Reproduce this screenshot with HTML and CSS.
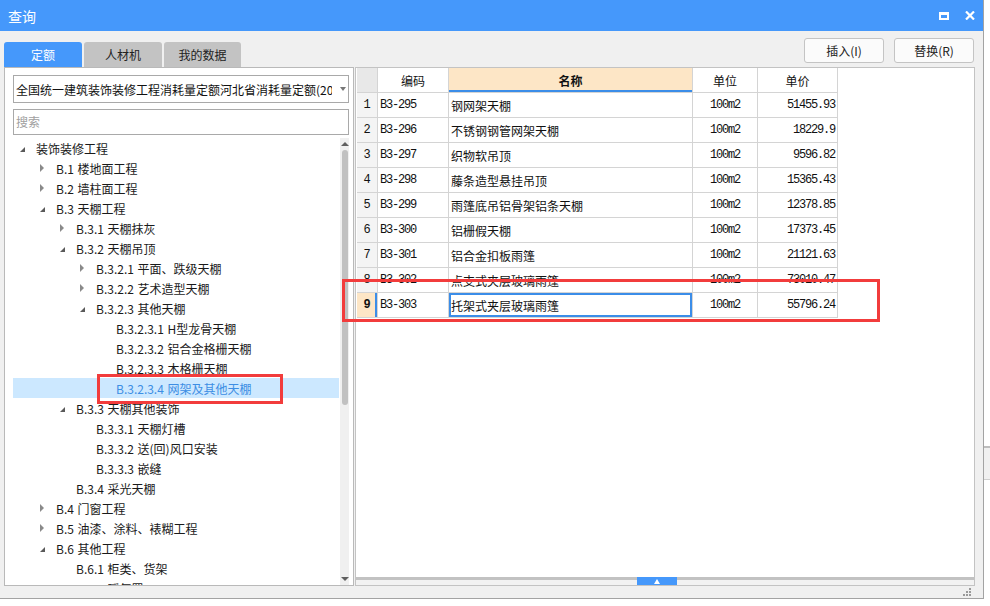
FILE: index.html
```html
<!DOCTYPE html>
<html>
<head>
<meta charset="utf-8">
<title>查询</title>
<link rel="stylesheet" href="styles.css">
</head>
<body>
<div class="bgpiece"></div>
<div class="window">
  <div class="titlebar">
    <span class="title">查询</span>
    <div class="tb-icons">
      <svg class="ic" width="10" height="8" viewBox="0 0 10 8"><path d="M0 0H10V8H0Z M2 3V6H8V3Z" fill="#fff" fill-rule="evenodd"/></svg>
      <svg class="ic" width="10" height="9" viewBox="0 0 10 9"><path d="M1 0.5L9 8.5M9 0.5L1 8.5" stroke="#fff" stroke-width="2.2" fill="none"/></svg>
    </div>
  </div>
  <div class="toprow">
    <div class="tabs">
      <div class="tab active">定额</div>
      <div class="tab">人材机</div>
      <div class="tab t3">我的数据</div>
    </div>
    <div class="btns">
      <div class="btn">插入(I)</div>
      <div class="btn">替换(R)</div>
    </div>
  </div>
  <div class="main">
    <div class="leftpanel">
      <div class="select"><span class="select-text">全国统一建筑装饰装修工程消耗量定额河北省消耗量定额(2016)</span><span class="caret"></span></div>
      <div class="search">搜索</div>
      <div class="tree">
        <div class="tree-list">
          <div class="row l0"><span class="tg open"></span>装饰装修工程</div>
          <div class="row l1"><span class="tg closed"></span>B.1 楼地面工程</div>
          <div class="row l1"><span class="tg closed"></span>B.2 墙柱面工程</div>
          <div class="row l1"><span class="tg open"></span>B.3 天棚工程</div>
          <div class="row l2"><span class="tg closed"></span>B.3.1 天棚抹灰</div>
          <div class="row l2"><span class="tg open"></span>B.3.2 天棚吊顶</div>
          <div class="row l3"><span class="tg closed"></span>B.3.2.1 平面、跌级天棚</div>
          <div class="row l3"><span class="tg closed"></span>B.3.2.2 艺术造型天棚</div>
          <div class="row l3"><span class="tg open"></span>B.3.2.3 其他天棚</div>
          <div class="row l4"><span class="tg"></span>B.3.2.3.1 H型龙骨天棚</div>
          <div class="row l4"><span class="tg"></span>B.3.2.3.2 铝合金格栅天棚</div>
          <div class="row l4"><span class="tg"></span>B.3.2.3.3 木格栅天棚</div>
          <div class="row l4 sel"><span class="tg"></span>B.3.2.3.4 网架及其他天棚</div>
          <div class="row l2"><span class="tg open"></span>B.3.3 天棚其他装饰</div>
          <div class="row l3"><span class="tg"></span>B.3.3.1 天棚灯槽</div>
          <div class="row l3"><span class="tg"></span>B.3.3.2 送(回)风口安装</div>
          <div class="row l3"><span class="tg"></span>B.3.3.3 嵌缝</div>
          <div class="row l2"><span class="tg"></span>B.3.4 采光天棚</div>
          <div class="row l1"><span class="tg closed"></span>B.4 门窗工程</div>
          <div class="row l1"><span class="tg closed"></span>B.5 油漆、涂料、裱糊工程</div>
          <div class="row l1"><span class="tg open"></span>B.6 其他工程</div>
          <div class="row l2"><span class="tg"></span>B.6.1 柜类、货架</div>
          <div class="row l2"><span class="tg"></span>B.6.2 暖气罩</div>
        </div>
        <div class="vscroll">
          <span class="arr up"></span>
          <span class="thumb"></span>
          <span class="arr down"></span>
        </div>
      </div>
    </div>
    <div class="rightpanel">
      <div class="grid">
        <div class="c hd rn"></div><div class="c hd">编码</div><div class="c hd selcol">名称</div><div class="c hd">单位</div><div class="c hd">单价</div>

        <div class="c rn">1</div><div class="c code">B3-295</div><div class="c name">钢网架天棚</div><div class="c unit">100m2</div><div class="c price">51455.93</div>
        <div class="c rn">2</div><div class="c code">B3-296</div><div class="c name">不锈钢钢管网架天棚</div><div class="c unit">100m2</div><div class="c price">18229.9</div>
        <div class="c rn">3</div><div class="c code">B3-297</div><div class="c name">织物软吊顶</div><div class="c unit">100m2</div><div class="c price">9596.82</div>
        <div class="c rn">4</div><div class="c code">B3-298</div><div class="c name">藤条造型悬挂吊顶</div><div class="c unit">100m2</div><div class="c price">15365.43</div>
        <div class="c rn">5</div><div class="c code">B3-299</div><div class="c name">雨篷底吊铝骨架铝条天棚</div><div class="c unit">100m2</div><div class="c price">12378.85</div>
        <div class="c rn">6</div><div class="c code">B3-300</div><div class="c name">铝栅假天棚</div><div class="c unit">100m2</div><div class="c price">17373.45</div>
        <div class="c rn">7</div><div class="c code">B3-301</div><div class="c name">铝合金扣板雨篷</div><div class="c unit">100m2</div><div class="c price">21121.63</div>
        <div class="c rn">8</div><div class="c code">B3-302</div><div class="c name">点支式夹层玻璃雨篷</div><div class="c unit">100m2</div><div class="c price">73010.47</div>
        <div class="c rn selrow">9</div><div class="c code">B3-303</div><div class="c name selcell">托架式夹层玻璃雨篷</div><div class="c unit">100m2</div><div class="c price">55796.24</div>
      </div>
      <div class="hbar"><span class="handle"><span class="htri"></span></span></div>
    </div>
  </div>
  <div class="bottom">
    <svg class="grip" width="8" height="8" viewBox="0 0 8 8">
      <rect x="6" y="0" width="2" height="2" fill="#9a9a9a"/>
      <rect x="3" y="3" width="2" height="2" fill="#9a9a9a"/>
      <rect x="6" y="3" width="2" height="2" fill="#9a9a9a"/>
      <rect x="0" y="6" width="2" height="2" fill="#9a9a9a"/>
      <rect x="3" y="6" width="2" height="2" fill="#9a9a9a"/>
      <rect x="6" y="6" width="2" height="2" fill="#9a9a9a"/>
    </svg>
  </div>
</div>
<div class="mark mark1"></div>
<div class="mark mark2"></div>
</body>
</html>
```
FILE: styles.css
```css
* { box-sizing: border-box; }
html, body { margin: 0; padding: 0; background: #fff; }
body {
  width: 990px; height: 606px; overflow: hidden; position: relative;
  font-family: "Noto Sans CJK SC", "Microsoft YaHei", sans-serif;
  font-size: 12px; color: #1e1e1e;
}
.bgpiece {
  position: absolute; left: 984px; top: 446px; width: 6px; height: 34px;
  background: #f0f0f0; border-top: 2px solid #bdbdbd; border-bottom: 1px solid #cfcfcf;
}
.window {
  width: 984px; height: 599px; background: #f0f0f0;
  border-right: 1px solid #a3a3a3; border-bottom: 1px solid #a3a3a3;
  display: flex; flex-direction: column;
}
.titlebar {
  height: 31px; flex: none; background: #4598fb; color: #fff;
  display: flex; align-items: center; padding: 0 8px 0 8px;
}
.title { flex: 1; font-size: 14px; }
.tb-icons { display: flex; align-items: center; gap: 16px; }
.ic { display: block; }

.toprow {
  height: 36px; flex: none; display: flex; justify-content: space-between;
  padding: 0 9px 0 4px;
}
.tabs { display: flex; gap: 2px; align-self: flex-end; }
.tab {
  width: 78px; height: 25px; line-height: 25px; text-align: center;
  background: #c3c3c3; color: #222; border-radius: 3px 3px 0 0; font-size: 12px;
}
.tab.t3 { width: 77px; }
.tab.active { background: #4598fb; color: #fff; }
.btns { display: flex; gap: 10px; margin-top: 7px; }
.btn {
  width: 80px; height: 25px; line-height: 23px; text-align: center;
  background: #fbfbfb; border: 1px solid #c4c4c4; border-radius: 3px; color: #222;
}

.main { height: 519px; flex: none; display: flex; gap: 1px; padding-left: 4px; }
.leftpanel {
  width: 350px; height: 519px; background: #fff; border: 1px solid #b9b9b9;
  padding: 7px 4px 0 8px; display: flex; flex-direction: column;
}
.select {
  height: 28px; flex: none; border: 1px solid #a9a9a9; display: flex; align-items: center;
  padding-left: 2px; position: relative;
}
.select-text { width: 316px; overflow: hidden; white-space: nowrap; font-size: 12px; color: #111; }
.caret {
  margin-left: 8px; width: 0; height: 0;
  border-left: 3px solid transparent; border-right: 3px solid transparent; border-top: 4px solid #777;
}
.search {
  height: 26px; flex: none; margin-top: 6px; border: 1px solid #a9a9a9;
  line-height: 24px; padding-left: 2px; color: #a0a0a0;
}
.tree { margin-top: 3px; height: 447px; display: flex; overflow: hidden; }
.tree-list { width: 327px; overflow: hidden; }
.row { height: 20px; display: flex; align-items: center; white-space: pre; color: #1a1a1a; word-spacing: 1px; }
.row.sel { background: #cce8ff; color: #3d8ee4; }
.l0 { padding-left: 7px; }
.l1 { padding-left: 27px; }
.l2 { padding-left: 47px; }
.l3 { padding-left: 67px; }
.l4 { padding-left: 87px; }
.tg { width: 16px; height: 20px; flex: none; position: relative; }
.tg.closed::before {
  content: ""; position: absolute; left: 0; top: 6px; width: 0; height: 0;
  border-left: 4px solid #8a8a8a; border-top: 4px solid transparent; border-bottom: 4px solid transparent;
}
.tg.open::before {
  content: ""; position: absolute; left: 0; top: 9px; width: 0; height: 0;
  border-bottom: 5px solid #5a5a5a; border-left: 5px solid transparent;
}
.vscroll {
  width: 9px; margin-left: 1px; background: #f0f0f0; display: flex; flex-direction: column; align-items: center;
}
.arr { width: 0; height: 0; border-left: 4px solid transparent; border-right: 4px solid transparent; }
.arr.up { border-bottom: 4px solid #606060; margin-top: 4px; }
.thumb { width: 6px; height: 255px; background: #c1c1c1; border-radius: 3px; margin-top: 4px; }
.arr.down { border-top: 4px solid #606060; margin-top: auto; margin-bottom: 4px; }

.rightpanel {
  width: 620px; height: 519px; background: #fff; border: 1px solid #c3c3c3;
  padding-left: 1px; display: flex; flex-direction: column;
}
.grid {
  display: grid; grid-template-columns: 21px 71px 244px 65px 80px;
  grid-auto-rows: 25px; width: 481px;
}
.c {
  border-right: 1px solid #d4d4d4; border-bottom: 1px solid #d4d4d4;
  display: flex; align-items: center; white-space: nowrap; overflow: hidden;
  font-size: 12px; color: #111;
}
.hd { justify-content: center; font-size: 12px; }
.hd.rn { background: #e8e8e8; }
.selcol { background: #fde6c6; font-weight: bold; box-shadow: inset 0 -2px 0 #3b8de8; }
.rn {
  background: #f4f4f4; justify-content: center;
  font-family: "Liberation Mono", monospace; font-size: 12px;
}
.selrow { background: #fde6c6; font-weight: bold; box-shadow: inset -2px 0 0 #3b8de8; }
.code, .unit, .price {
  font-family: "Liberation Mono", monospace; font-size: 12px; letter-spacing: -1.2px;
}
.code { padding-left: 2px; }
.name { padding-left: 2px; }
.unit { justify-content: center; }
.price { justify-content: flex-end; padding-right: 2px; }
.selcell { box-shadow: inset 0 0 0 2px #3b8de8; }

.hbar {
  margin-top: auto; margin-left: -1px; height: 8px; flex: none;
  background: #f2f2f2; border-top: 3px solid #c2c2c2; display: flex;
}
.handle {
  width: 40px; height: 8px; margin-top: -3px; margin-left: 281px; background: #4598fb;
  display: flex; justify-content: center; align-items: flex-end;
}
.htri {
  width: 0; height: 0; margin-bottom: 1px;
  border-left: 3px solid transparent; border-right: 3px solid transparent; border-bottom: 5px solid #fff;
}

.bottom {
  height: 12px; flex: none; display: flex; justify-content: flex-end; align-items: flex-start;
  padding-right: 12px; padding-top: 2px;
}
.grip { display: block; }

.mark { position: absolute; border: 3px solid #f23c3c; pointer-events: none; }
.mark1 { left: 97px; top: 374px; width: 186px; height: 30px; }
.mark2 { left: 342px; top: 279px; width: 538px; height: 43px; }
```
